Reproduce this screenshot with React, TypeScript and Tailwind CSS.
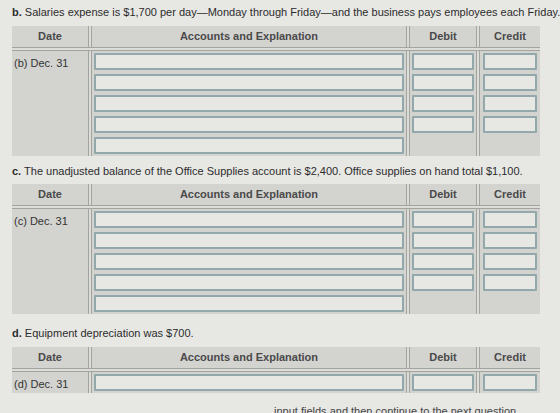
import React from "react";

type JournalProps = {
  label: string;
  lines: number;
  amountLines: number;
};

const inputCls =
  "h-[17px] w-full border-2 border-[#93a8aa] bg-[#e7e7e3] rounded-[1px]";

const VSep = () => (
  <div className="w-[4px] shrink-0 self-stretch border-x border-[#a3a3a0] bg-[#dcdcd9]" />
);

const JournalTable: React.FC<JournalProps> = ({ label, lines, amountLines }) => {
  const rows = Array.from({ length: lines });
  const amounts = Array.from({ length: amountLines });

  return (
    <div className="w-[528px] bg-[#d3d3d0]">
      {/* header */}
      <div className="flex h-[21px] items-center text-[11px] font-bold text-[#4a4a4a]">
        <div className="w-[76px] text-center">Date</div>
        <VSep />
        <div className="w-[314px] text-center">Accounts and Explanation</div>
        <VSep />
        <div className="w-[66px] text-center">Debit</div>
        <VSep />
        <div className="flex-1 text-center">Credit</div>
      </div>
      <div className="h-[4px] border-y border-[#a3a3a0] bg-[#dcdcd9]" />
      {/* body */}
      <div className="flex">
        <div className="w-[76px] pl-[2px] pt-[4px] text-[11px] text-[#333]">{label}</div>
        <VSep />
        <div className="flex w-[314px] flex-col gap-[4px] px-[2px] py-[2px]">
          {rows.map((_, i) => (
            <div key={i} className={inputCls} />
          ))}
        </div>
        <VSep />
        <div className="flex w-[66px] flex-col gap-[4px] px-[2px] py-[2px]">
          {amounts.map((_, i) => (
            <div key={i} className={inputCls} />
          ))}
        </div>
        <VSep />
        <div className="flex flex-1 flex-col gap-[4px] px-[3px] py-[2px]">
          {amounts.map((_, i) => (
            <div key={i} className={inputCls} />
          ))}
        </div>
      </div>
    </div>
  );
};

export default function App() {
  return (
    <div
      className="h-[413px] w-[560px] overflow-hidden bg-[#e7e7e4] pl-[12px] text-[#2c2c2c]"
      style={{ fontFamily: '"Liberation Sans", Arial, sans-serif' }}
    >
      <p className="whitespace-nowrap pt-[5px] text-[11px] leading-[14px]">
        <b>b.</b> Salaries expense is $1,700 per day—Monday through Friday—and the business pays employees each Friday. This
      </p>
      <div className="mt-[7px]">
        <JournalTable label="(b) Dec. 31" lines={5} amountLines={4} />
      </div>

      <p className="mt-[8px] whitespace-nowrap text-[11px] leading-[14px]">
        <b>c.</b> The unadjusted balance of the Office Supplies account is $2,400. Office supplies on hand total $1,100.
      </p>
      <div className="mt-[6px]">
        <JournalTable label="(c) Dec. 31" lines={5} amountLines={4} />
      </div>

      <p className="mt-[12px] whitespace-nowrap text-[11px] leading-[14px]">
        <b>d.</b> Equipment depreciation was $700.
      </p>
      <div className="mt-[7px]">
        <JournalTable label="(d) Dec. 31" lines={1} amountLines={1} />
      </div>

      <p className="mt-[11px] whitespace-nowrap pl-[262px] text-[11px] leading-[14px] text-[#444]">
        input fields and then continue to the next question.
      </p>
    </div>
  );
}
